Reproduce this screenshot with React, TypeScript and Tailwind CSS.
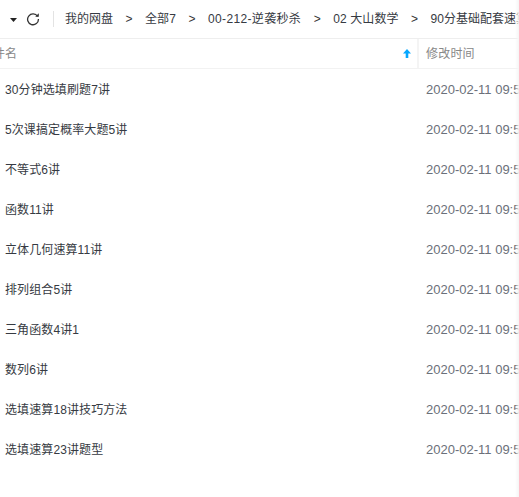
const rows = ["30分钟选填刷题7讲","5次课搞定概率大题5讲","不等式6讲","函数11讲","立体几何速算11讲","排列组合5讲","三角函数4讲1","数列6讲","选填速算18讲技巧方法","选填速算23讲题型"];
const font = { fontFamily: '"Microsoft YaHei","Liberation Sans","Noto Sans CJK SC",sans-serif' };
const Sep = () => <span className="mx-[12.5px] w-[7px] text-center text-[#333333]">&gt;</span>;
export default function App() {
  return (
    <div className="w-[519px] h-[497px] overflow-hidden bg-white text-[12px] relative" style={font}>
      <div className="h-[39px] flex items-center border-b border-[#eeeeee] whitespace-nowrap text-[#363a42]">
        <svg width="7" height="4" viewBox="0 0 7 4" className="ml-[10px] mt-[1px] shrink-0"><path d="M0 0h7L3.5 4z" fill="#222" /></svg>
        <svg width="14" height="14" viewBox="0 0 14 14" className="ml-[9px] shrink-0" fill="none"><path d="M11.6 4.5A5.4 5.4 0 1 0 12.4 7" stroke="#333" strokeWidth="1.3" /><path d="M9.2 4.8h3.6V1.2z" fill="#333" /></svg>
        <div className="w-px h-[16px] bg-[#e3e3e3] ml-[13px] mr-[11px] shrink-0" />
        <span className="shrink-0">我的网盘</span>
        <Sep />
        <span className="shrink-0 tracking-[0.1px]">全部7</span>
        <Sep />
        <span className="shrink-0 tracking-[0.35px]">00-212-逆袭秒杀</span>
        <Sep />
        <span className="shrink-0 tracking-[0.1px]">02 大山数学</span>
        <Sep />
        <span className="shrink-0">90分基础配套速算</span>
      </div>
      <div className="h-[30px] flex border-b border-[#f2f2f2] text-[#888888] items-center">
        <div className="w-[419px] h-full shrink-0 flex items-center justify-between border-r-2 border-[#f4f4f4] pr-[6px]">
          <span className="ml-[-19px] mt-[1px]">文件名</span>
          <svg width="8" height="9" viewBox="0 0 8 9"><path d="M4 0L8 4.4H5.3V9H2.7V4.4H0z" fill="#06a7ff" /></svg>
        </div>
        <span className="ml-[7px] mt-[1px] tracking-[0.2px]">修改时间</span>
      </div>
      {rows.map((r) => (
        <div key={r} className="h-[40px] flex items-center whitespace-nowrap pt-[2px]">
          <span className="w-[426px] pl-[5px] shrink-0 text-[#363a42] tracking-[0.1px]">{r}</span>
          <span className="text-[#6b7079] text-[13px]">2020-02-11 09:53</span>
        </div>
      ))}
      <div className="absolute top-0 right-0 h-full w-[4px] bg-gradient-to-r from-white/0 to-[#f5f5f5]" />
    </div>
  );
}
